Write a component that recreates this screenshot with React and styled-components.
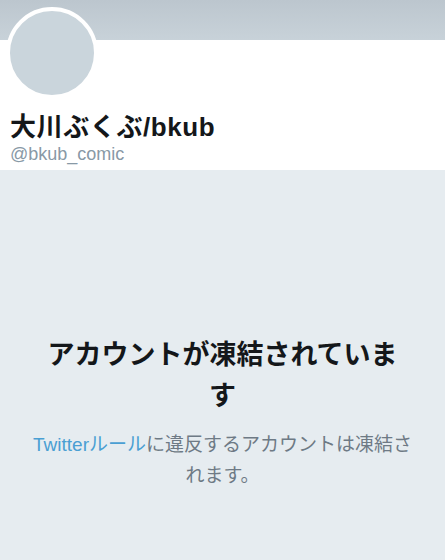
import React from 'react';
import styled, { createGlobalStyle } from 'styled-components';

const GlobalStyle = createGlobalStyle`
  html, body {
    margin: 0;
    padding: 0;
    background: #e6ecf0;
  }
  body {
    font-family: "Liberation Sans", "Noto Sans CJK JP", sans-serif;
  }
`;

const Page = styled.div`
  width: 445px;
  height: 560px;
  overflow: hidden;
  background: #e6ecf0;
`;

const Banner = styled.div`
  height: 40px;
  background: linear-gradient(180deg, #bcc6ce 0%, #c8d2d9 100%);
`;

const Profile = styled.section`
  background: #ffffff;
  height: 130px;
  padding: 0 10px;
  display: flex;
  flex-direction: column;
`;

const Avatar = styled.div`
  width: 84px;
  height: 84px;
  margin: -33px 0 0 -4px;
  border-radius: 50%;
  background: #cad5dc;
  border: 4px solid #ffffff;
  flex: none;
`;

const Name = styled.h1`
  margin: 13px 0 0;
  font-size: 26px;
  line-height: 30px;
  font-weight: 700;
  letter-spacing: 0.6px;
  color: #14171a;
  font-family: "Liberation Sans", "Noto Sans CJK JP", sans-serif;
`;

const Handle = styled.div`
  margin-top: 1px;
  font-size: 18px;
  line-height: 22px;
  color: #8899a6;
`;

const Notice = styled.section`
  padding: 162px 20px 0;
  display: flex;
  flex-direction: column;
  align-items: center;
  text-align: center;
  gap: 15px;
`;

const Title = styled.h2`
  margin: 0;
  width: 370px;
  font-size: 27px;
  line-height: 41px;
  font-weight: 700;
  color: #14171a;
  font-family: "Noto Sans CJK JP", sans-serif;
`;

const Body = styled.p`
  margin: 0;
  width: 388px;
  font-size: 19px;
  line-height: 31px;
  color: #6e7a85;
`;

const Link = styled.span`
  color: #4a9fd3;
`;

export default function App() {
  return (
    <Page>
      <GlobalStyle />
      <Banner />
      <Profile>
        <Avatar />
        <Name>大川ぶくぶ/bkub</Name>
        <Handle>@bkub_comic</Handle>
      </Profile>
      <Notice>
        <Title>アカウントが凍結されています</Title>
        <Body>
          <Link>Twitterルール</Link>に違反するアカウントは凍結されます。
        </Body>
      </Notice>
    </Page>
  );
}
